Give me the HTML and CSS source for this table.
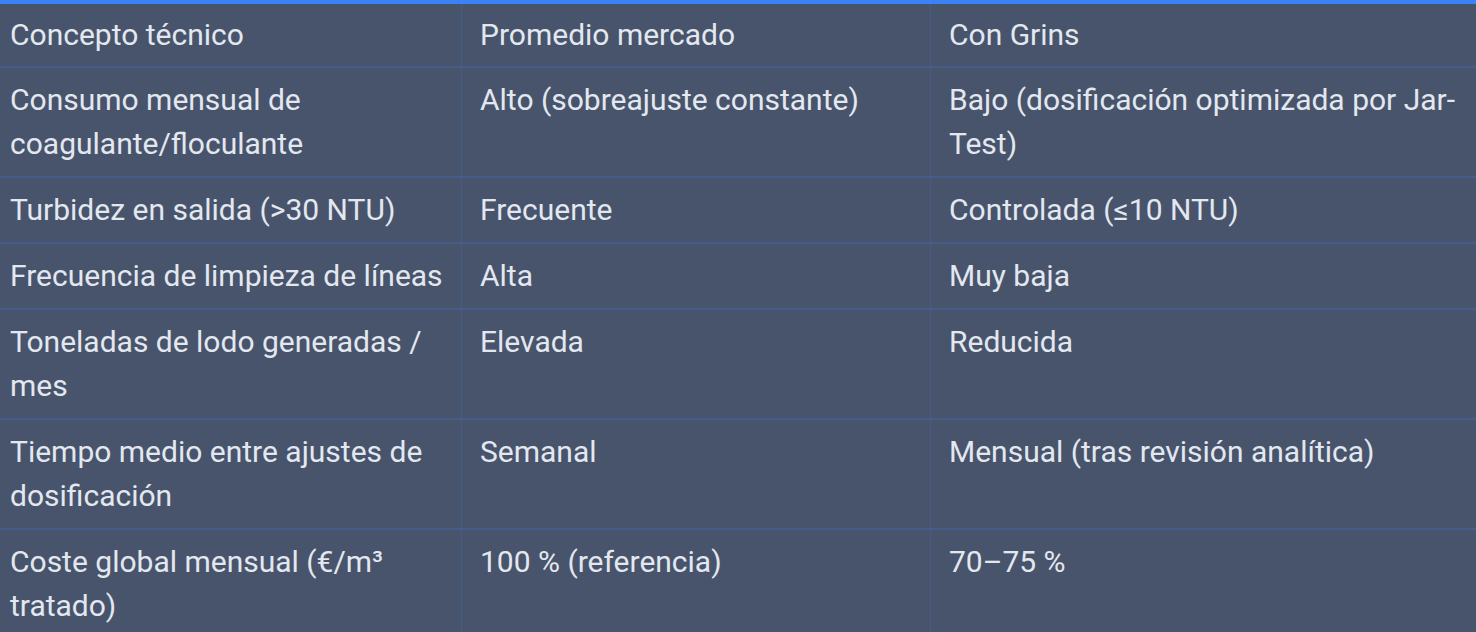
FILE: index.html
```html
<!DOCTYPE html>
<html lang="es">

<head>
  <meta charset="UTF-8">
  <meta name="viewport" content="width=device-width, initial-scale=1.0">
  <title>Comparativa técnica</title>
  <link rel="stylesheet" href="styles.css">
</head>

<body>
  <table class="compare-table">
    <colgroup>
      <col class="col-concept">
      <col class="col-market">
      <col class="col-grins">
    </colgroup>
    <thead>
      <tr>
        <th>Concepto técnico</th>
        <th>Promedio mercado</th>
        <th>Con Grins</th>
      </tr>
    </thead>
    <tbody>
      <tr>
        <td>Consumo mensual de coagulante/floculante</td>
        <td>Alto (sobreajuste constante)</td>
        <td>Bajo (dosificación optimizada por Jar-Test)</td>
      </tr>
      <tr>
        <td>Turbidez en salida (&gt;30 NTU)</td>
        <td>Frecuente</td>
        <td>Controlada (≤10 NTU)</td>
      </tr>
      <tr>
        <td>Frecuencia de limpieza de líneas</td>
        <td>Alta</td>
        <td>Muy baja</td>
      </tr>
      <tr>
        <td>Toneladas de lodo generadas / mes</td>
        <td>Elevada</td>
        <td>Reducida</td>
      </tr>
      <tr>
        <td>Tiempo medio entre ajustes de dosificación</td>
        <td>Semanal</td>
        <td>Mensual (tras revisión analítica)</td>
      </tr>
      <tr>
        <td>Coste global mensual (€/m³ tratado)</td>
        <td>100 % (referencia)</td>
        <td>70–75 %</td>
      </tr>
    </tbody>
  </table>
</body>

</html>
```

FILE: styles.css
```css
body {
  font-family: Roboto, "Noto Sans", sans-serif;
  margin: 0;
  padding: 0;
  background-color: #48546b;
  color: #e3e8f0;
}

.compare-table {
  width: 1476px;
  table-layout: fixed;
  border-collapse: separate;
  border-spacing: 0;
  border-top: 4px solid #3b82f6;
  background-color: #48546b;
  font-size: 30px;
  line-height: 44px;
}

.col-concept {
  width: 462px;
}

.col-market {
  width: 469px;
}

.compare-table th,
.compare-table td {
  text-align: left;
  vertical-align: top;
  font-weight: normal;
  padding: 10px 18px;
  border-right: 1px solid rgba(59, 130, 246, 0.18);
  border-bottom: 2px solid rgba(59, 130, 246, 0.22);
}

.compare-table th {
  padding-top: 9px;
  padding-bottom: 9px;
}

.compare-table th:first-child,
.compare-table td:first-child {
  padding-left: 10px;
}

.compare-table th:last-child,
.compare-table td:last-child {
  border-right: none;
}
```
